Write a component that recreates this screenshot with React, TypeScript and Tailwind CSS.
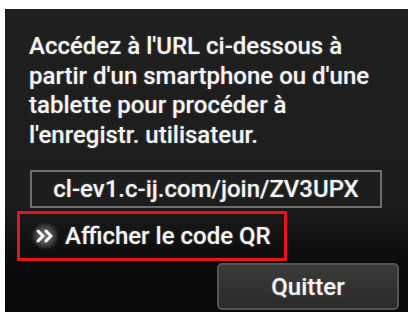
export default function App() {
  return (
    <div className="w-[412px] h-[312px] bg-white pl-[5px] pt-[9px] pr-[4px] overflow-hidden [font-family:Roboto,'Noto_Sans',sans-serif]">
      <div className="h-[303px] flex flex-col bg-[linear-gradient(to_bottom,#1f1f1f_0px,#1d1d1d_190px,#0b0b0b_255px,#090909_100%)] text-[#f4f4f4] [text-shadow:0_0_2px_rgba(255,255,255,0.35)]">
        <p className="pl-[24px] pt-[23px] text-[24px] leading-[29.5px] font-medium whitespace-nowrap">
          Accédez à l'URL ci-dessous à
          <br />
          partir d'un smartphone ou d'une
          <br />
          tablette pour procéder à
          <br />
          l'enregistr. utilisateur.
        </p>
        <div className="mt-[20px] ml-[25px] w-[352px] h-[38px] border-2 border-[#6e6e6e] flex items-center justify-center text-[24px] font-medium">
          cl-ev1.c-ij.com/join/ZV3UPX
        </div>
        <div className="mt-[3px] ml-[12px] w-[270px] h-[50px] border-[3px] border-[#e8141b] flex items-center pl-[11px]">
          <div className="w-[28px] h-[28px] rounded-full bg-[radial-gradient(circle,#7a7a7a_0%,#4a4a4a_40%,rgba(40,40,40,0)_72%)] flex items-center justify-center">
            <svg width="20" height="16" viewBox="0 0 20 16" fill="none" stroke="#ffffff" strokeWidth="3" strokeLinecap="round" strokeLinejoin="round">
              <path d="M3 3 L8 8 L3 13" />
              <path d="M11 3 L16 8 L11 13" />
            </svg>
          </div>
          <span className="ml-[6px] text-[24px] font-medium whitespace-nowrap">Afficher le code QR</span>
        </div>
        <div className="mt-[2px] ml-[212px] w-[182px] h-[47px] rounded-[5px] border-2 border-[#555555] bg-[linear-gradient(to_bottom,#3a3a3a,#2a2a2a)] flex items-center justify-center text-[24px] font-medium">
          Quitter
        </div>
      </div>
    </div>
  );
}
